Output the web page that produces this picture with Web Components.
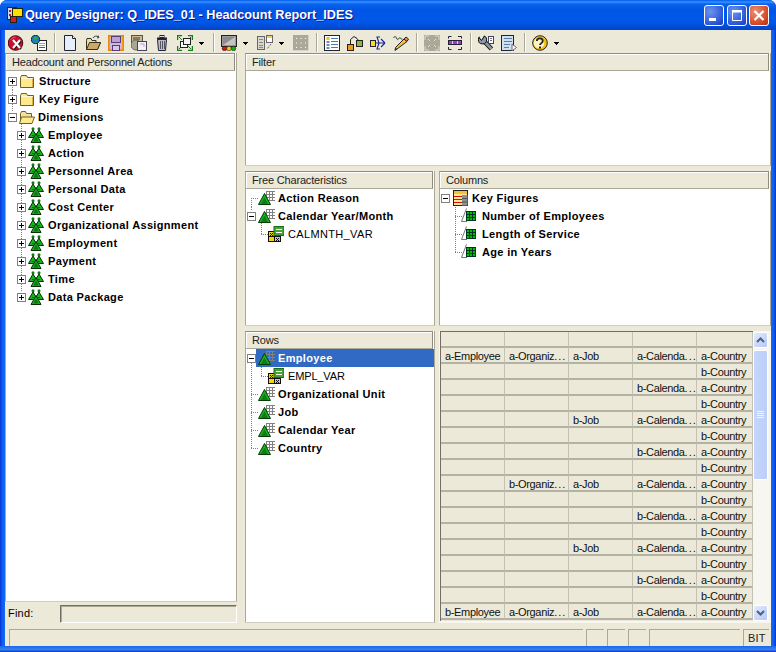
<!DOCTYPE html>
<html><head><meta charset="utf-8"><title>Query Designer</title>
<style>
html,body{margin:0;padding:0;background:#fff}
body{font:11px "Liberation Sans",Arial,sans-serif;color:#000}
</style></head><body>
<xp-window title="Query Designer: Q_IDES_01 - Headcount Report_IDES">
  <xp-toolbar slot="toolbar">
    <tool-btn icon="stop"></tool-btn><tool-btn icon="globe"></tool-btn><tool-sep></tool-sep>
    <tool-btn icon="new"></tool-btn><tool-btn icon="open"></tool-btn><tool-btn icon="save"></tool-btn><tool-btn icon="copy"></tool-btn><tool-btn icon="trash"></tool-btn><tool-btn icon="frame"></tool-btn><tool-arrow></tool-arrow><tool-sep></tool-sep>
    <tool-btn icon="monitor"></tool-btn><tool-arrow></tool-arrow><tool-btn icon="dual"></tool-btn><tool-arrow></tool-arrow><tool-btn icon="dis1"></tool-btn><tool-sep></tool-sep>
    <tool-btn icon="list"></tool-btn><tool-btn icon="tree"></tool-btn><tool-btn icon="share"></tool-btn><tool-btn icon="pencil"></tool-btn><tool-sep></tool-sep>
    <tool-btn icon="dis2"></tool-btn><tool-btn icon="purple"></tool-btn><tool-sep></tool-sep>
    <tool-btn icon="wrench"></tool-btn><tool-btn icon="doc"></tool-btn><tool-sep></tool-sep>
    <tool-btn icon="help"></tool-btn><tool-arrow></tool-arrow>
  </xp-toolbar>
  <qd-workspace slot="main">
    <qd-side slot="side">
      <xp-pane heading="Headcount and Personnel Actions" style="flex:1">
        <tree-row style="margin-top:1px" icon="folder" exp="+" x="2" pad="4" text="Structure" bold guides="v6:9:9"></tree-row>
        <tree-row icon="folder" exp="+" x="2" pad="4" text="Key Figure" bold guides="v6:0:18"></tree-row>
        <tree-row icon="folderopen" exp="-" x="2" gap="2" pad="3" text="Dimensions" bold guides="v6:0:4 v15:14:4"></tree-row>
        <tree-row icon="hier" exp="+" x="11" gap="2" text="Employee" bold guides="v15:0:18"></tree-row>
        <tree-row icon="hier" exp="+" x="11" gap="2" text="Action" bold guides="v15:0:18"></tree-row>
        <tree-row icon="hier" exp="+" x="11" gap="2" text="Personnel Area" bold guides="v15:0:18"></tree-row>
        <tree-row icon="hier" exp="+" x="11" gap="2" text="Personal Data" bold guides="v15:0:18"></tree-row>
        <tree-row icon="hier" exp="+" x="11" gap="2" text="Cost Center" bold guides="v15:0:18"></tree-row>
        <tree-row icon="hier" exp="+" x="11" gap="2" text="Organizational Assignment" bold guides="v15:0:18"></tree-row>
        <tree-row icon="hier" exp="+" x="11" gap="2" text="Employment" bold guides="v15:0:18"></tree-row>
        <tree-row icon="hier" exp="+" x="11" gap="2" text="Payment" bold guides="v15:0:18"></tree-row>
        <tree-row icon="hier" exp="+" x="11" gap="2" text="Time" bold guides="v15:0:18"></tree-row>
        <tree-row icon="hier" exp="+" x="11" gap="2" text="Data Package" bold guides="v15:0:4"></tree-row>
      </xp-pane>
      <find-bar></find-bar>
    </qd-side>
    <qd-right slot="right">
      <xp-pane heading="Filter" style="grid-column:1 / span 2"></xp-pane>
      <xp-pane heading="Free Characteristics">
        <tree-row icon="char" x="12" pad="3" text="Action Reason" bold guides="v5:9:9 h5:9:7"></tree-row>
        <tree-row icon="char" exp="-" x="1" gap="2" pad="3" text="Calendar Year/Month" bold guides="v5:0:4 v15:14:4"></tree-row>
        <tree-row style="--ls:.35px" icon="var" x="22" text="CALMNTH_VAR" guides="v15:0:9 h15:9:7"></tree-row>
      </xp-pane>
      <xp-pane heading="Columns">
        <tree-row icon="kfs" exp="-" x="1" gap="3" text="Key Figures" bold guides="v15:14:4"></tree-row>
        <tree-row icon="kf" x="21" pad="5" text="Number of Employees" bold guides="v15:0:18 h15:9:7"></tree-row>
        <tree-row icon="kf" x="21" pad="5" text="Length of Service" bold guides="v15:0:18 h15:9:7"></tree-row>
        <tree-row icon="kf" x="21" pad="5" text="Age in Years" bold guides="v15:0:9 h15:9:7"></tree-row>
      </xp-pane>
      <xp-pane heading="Rows">
        <tree-row icon="char" exp="-" x="1" gap="2" pad="3" text="Employee" bold selected guides="v5:14:4"></tree-row>
        <tree-row style="--ls:-.15px" icon="var" x="22" text="EMPL_VAR" guides="v5:0:18 v15:0:9 h15:9:7"></tree-row>
        <tree-row icon="char" x="12" pad="3" text="Organizational Unit" bold guides="v5:0:18 h5:9:7"></tree-row>
        <tree-row icon="char" x="12" pad="3" text="Job" bold guides="v5:0:18 h5:9:7"></tree-row>
        <tree-row icon="char" x="12" pad="3" text="Calendar Year" bold guides="v5:0:18 h5:9:7"></tree-row>
        <tree-row icon="char" x="12" pad="3" text="Country" bold guides="v5:0:9 h5:9:7"></tree-row>
      </xp-pane>
      <preview-grid></preview-grid>
    </qd-right>
  </qd-workspace>
  <xp-status slot="status"></xp-status>
</xp-window>
<script>
const S=(b,w=16,h=16)=>`<svg xmlns="http://www.w3.org/2000/svg" width="${w}" height="${h}" viewBox="0 0 ${w} ${h}">${b}</svg>`;
const grid=(x,y,n,c,st)=>{let s='';for(let i=0;i<=n;i++){s+=`<path d="M${x+i*st+.5} ${y}v${n*st+1}M${x} ${y+i*st+.5}h${n*st+1}" stroke="${c}" fill="none" shape-rendering="crispEdges"/>`}return s};
const ICONS={
stop:S(`<circle cx="7.500" cy="8" r="7.300" fill="#cc0f2c" stroke="#3a0008" stroke-width=".9"/><path d="M2.500 5a6 6 0 0 1 5-3" stroke="#f58" fill="none"/><path d="M6 6l7 8M13 6l-7 8" stroke="#222" stroke-width="2"/><path d="M5 5l7 8M12 5l-7 8" stroke="#fff" stroke-width="2"/>`),
globe:S(`<rect x="6.500" y="5.500" width="9" height="10" fill="#fff" stroke="#222"/><path d="M8 8.500h6M8 10.500h6" stroke="#d8a020"/><path d="M8 12.500h6" stroke="#c22"/><circle cx="4.500" cy="4.500" r="4.100" fill="#1b7fc0" stroke="#123"/><path d="M2 3l3-2 2 2-3 2zM4 6l2 1-1 1z" fill="#2fae3a"/>`),
new:S(`<path d="M2.500.5h8l3 3v12h-11z" fill="#e6eefb" stroke="#223"/><path d="M10.500.5v3h3" fill="#fff" stroke="#223"/>`,16,16),
open:S(`<path d="M1.500 5.500v9h11l3-7H11V5.500H7l-1-2H2z" fill="#efd9a8" stroke="#332"/><path d="M1.500 14.500l3-7h11l-3 7z" fill="#cfa868" stroke="#332"/><path d="M8 3c1-2 4-2.500 5-1M13 .5l1 2-2 .5" fill="none" stroke="#444"/>`),
save:S(`<rect x=".5" y=".5" width="15" height="15" fill="#cdb8df" stroke="#e88a10"/><rect x="1.500" y="1.500" width="13" height="13" fill="none" stroke="#f39a1a"/><rect x="3.500" y="1.500" width="9" height="6" fill="#b9a4d0" stroke="#5a3a7a"/><rect x="4.500" y="10.500" width="7" height="5" fill="#d8c8e6" stroke="#5a3a7a"/>`),
copy:S(`<rect x=".5" y=".5" width="11" height="11" fill="#cdbb8e" stroke="#554"/><rect x="2" y="2" width="7" height="3" fill="#8a7a58"/><circle cx="5" cy="10" r="5" fill="#a8a890" stroke="#667"/><rect x="6.500" y="6.500" width="9" height="9" fill="#f4f0fa" stroke="#445"/><path d="M9 9h4v3" stroke="#b7a5c7" fill="none"/>`),
trash:S(`<path d="M2 3.500h10" stroke="#223" stroke-width="2"/><rect x="5" y=".5" width="4" height="2" fill="#ddd" stroke="#223"/><path d="M2.500 4.500l1 11h7l1-11z" fill="#b9bdc6" stroke="#223"/><path d="M5.500 6v8M7.500 6v8M9.500 6v8" stroke="#556"/>`,14,16),
frame:S(`<path d="M.5 5V.5H5M11 .5h4.500V5M.5 11v4.500H5M15.500 11v4.500H11" fill="none" stroke="#1a7a1a" stroke-width="1.500"/><path d="M2 2l3 3M14 2l-3 3M2 14l3-3M14 14l-3-3" stroke="#1a7a1a"/><rect x="3.500" y="6.500" width="7" height="6" fill="#fff" stroke="#222"/><rect x="6.500" y="3.500" width="7" height="6" fill="#f4f4f4" stroke="#222"/>`),
monitor:S(`<rect x=".5" y=".5" width="15" height="11" fill="#9b9b9b" stroke="#222"/><rect x="2" y="2" width="12" height="8" fill="#c4c4c4"/><path d="M2 2h12L2 10z" fill="#8c8c8c"/><circle cx="3.500" cy="13.500" r="2.300" fill="#e01010" stroke="#222" stroke-width=".6"/><circle cx="8" cy="13.500" r="2.300" fill="#f0d010" stroke="#222" stroke-width=".6"/><circle cx="12.500" cy="13.500" r="2.300" fill="#10b010" stroke="#222" stroke-width=".6"/>`),
dual:S(`<rect x=".5" y="1.500" width="7" height="13" fill="#d8d8d0" stroke="#666"/><path d="M2 4.500h4M2 7.500h4M2 10.500h4M2 12.500h4" stroke="#888"/><rect x="9.500" y=".5" width="6" height="7" fill="#fff" stroke="#666"/><rect x="10" y="1" width="5" height="2" fill="#f2d060"/><path d="M14 9l-4 5" stroke="#444" stroke-dasharray="1 1"/>`),
dis1:S(`<rect width="16" height="16" fill="#aca899"/><path d="M3.500 3v1M8 3v1M12.500 3v1M12.500 7.500v1M12.500 12v1M8 7.500v1M3.500 7.500v1M3.500 12v1M8 12v1" stroke="#fff" stroke-dasharray="1 1"/><path d="M16 0v16H0" stroke="#fff" fill="none" stroke-width="1"/>`),
list:S(`<rect x=".5" y=".5" width="15" height="15" fill="#fff" stroke="#223"/><path d="M7 3.500h7M7 6.500h7M7 9.500h7M7 12.500h7" stroke="#4a78b0"/><rect x="2.500" y="2" width="3" height="3" fill="#e0c020"/><path d="M2.500 6h3v2h-3zM2.500 9h3v2h-3zM2.500 12h3v2h-3z" fill="#6a8ab8"/>`),
tree:S(`<rect x=".5" y="9.500" width="6" height="6" fill="#f49a10" stroke="#222"/><rect x="9.500" y="5.500" width="6" height="6" fill="#98b040" stroke="#222"/><path d="M3.500 9V4.500L7 1.500l3 2 1.500 2" fill="none" stroke="#222"/>`),
share:S(`<rect x=".5" y="5.500" width="5" height="6" fill="#f4e020" stroke="#223"/><path d="M6 8h9M15 8l-4-4M15 8l-4 4M9 8l-2-6h3M9 8l-2 6h3" fill="none" stroke="#1a28a0" stroke-width="1.100"/>`),
pencil:S(`<path d="M4 14l-2 1.500.5-3L11 4l3 2.500z" fill="#f4c040" stroke="#222"/><path d="M11 4l2-2 2.500 2-1.500 2.500z" fill="#f08a70" stroke="#222"/><path d="M2 15l1-2 1 1z" fill="#222"/><path d="M.5 3c1-2 2-2 3 0s1 2 2 1 1-2 2-1 1 2 2 1" fill="none" stroke="#333"/>`),
dis2:S(`<rect width="16" height="16" fill="#aca899"/><path d="M1 4.500V1h3.500M11.500 1H15v3.500M1 11.500V15h3.500M15 11.500V15h-3.500M4 4l2.500 2.500M12 4L9.500 6.500M4 12l2.500-2.500M12 12L9.500 9.500" fill="none" stroke="#fff" stroke-dasharray="1 1"/>`),
purple:S(`<path d="M1.500 3.500v-2h3M11 1.500h3.500v2M1.500 12v2.500h3M14.500 12v2.500H11" fill="none" stroke="#223"/><rect x="1.500" y="5.500" width="13" height="4" fill="#9a40b8" stroke="#223"/><path d="M5.500 6v3M10.500 6v3" stroke="#e8d0f0"/>`),
wrench:S(`<path d="M5 5l8.500 9" stroke="#111" stroke-width="4.600"/><path d="M5 5l8.500 9" stroke="#8b98a4" stroke-width="2.600"/><circle cx="4.500" cy="4.800" r="4.100" fill="#8b98a4" stroke="#111"/><path d="M0-1L3.500 5 7-1z" fill="#ece9d8"/><path d="M.7 2.500L3.500 5.500 6.500 1" fill="none" stroke="#111"/><rect x="10.500" y="1.500" width="5" height="7" fill="#fff" stroke="#445"/><path d="M12 3.500h2M12 5.500h2" stroke="#668"/>`),
doc:S(`<rect x=".5" y=".5" width="12" height="15" fill="#cfe0ef" stroke="#223"/><path d="M3 3.500h8M3 6.500h8M3 9.500h6M3 12.500h5" stroke="#5a7fa8"/><path d="M11 9l4.500 3.500-4.500 3.500z" fill="#fff" stroke="#667"/>`),
help:S(`<circle cx="8" cy="8" r="7.300" fill="#f7c010" stroke="#222"/><circle cx="7" cy="8" r="5.300" fill="#fff3c0"/><path d="M4.800 6c0-3.500 6-3.500 6 0 0 2-2.800 2.200-2.800 4" fill="none" stroke="#222" stroke-width="1.800"/><rect x="7" y="11.500" width="2" height="2" fill="#222"/>`),
folder:S(`<path d="M.5 3.500l1-2h5l1 2h6v10H.5z" fill="#ffe98f" stroke="#6e6020"/><path d="M1.500 4.500h11" stroke="#fff8d0"/><path d="M12.500 5v8" stroke="#e0b040"/>`,15,14),
folderopen:S(`<path d="M1.500 13V3.500l1-2h4l1 2h5V7" fill="#f2e2a0" stroke="#6e6020"/><path d="M.5 13.500l2-6.500h13l-2.500 6.500z" fill="#ffe98f" stroke="#6e6020"/>`,16,14),
hier:S(`<circle cx="5" cy="1.700" r="1.500" fill="#0f7a14"/><circle cx="11" cy="1.700" r="1.500" fill="#0f7a14"/><path d="M5 3L.5 10.500h9zM11 3L6.500 10.500h9z" fill="#15b51d" stroke="#053005"/><path d="M8 6.500L3 15.500h10z" fill="#15b51d" stroke="#053005"/><path d="M8 9l-2.500 5.500h5z" fill="#0c7a10"/><path d="M4 8.500h2M10 8.500h2" stroke="#0a6a0e"/>`,16,16),
char:S(grid(8,1,3,'#808080',3)+`<path d="M6.500 3.500L.5 14.500h12z" fill="#17b020" stroke="#063a06"/><path d="M6.500 7.500l-3.500 6.500h7z" fill="#0b7f10"/>`,17,16),
kf:S(`<path d="M5.500 .5L.5 13.500H6" fill="#fff" stroke="#777"/><rect x="5" y="3" width="10" height="10" fill="#00c000"/>`+grid(5,3,3,'#032',3),16,16),
kfs:S(`<rect x=".5" y=".5" width="14" height="15" fill="#ffe890" stroke="#222"/><path d="M1 1h13v3H1z" fill="#f0c040"/><path d="M1 6.500h8M1 9.500h8M1 12.500h8" stroke="#d01010"/><rect x="9" y="5" width="5.500" height="10.500" fill="#909090"/><path d="M9 8.500h6M9 12h6" stroke="#555"/>`,15,16),
var:S(`<rect x=".5" y="5.500" width="12" height="10" fill="#f2d800" stroke="#111"/><path d="M6.500 6v9M1 10.500h11" stroke="#111"/><path d="M2 7l3 3M5 7l-3 3M8 12l3 3M11 12l-3 3" stroke="#111"/><rect x="6" y=".5" width="10" height="9" fill="#48a038" stroke="#1e6a18"/><path d="M8 3.500h6M8 6.500h6" stroke="#fff"/>`,16,16)
};
function def(name,css,html){
  customElements.define(name,class extends HTMLElement{
    constructor(){super();const r=this.attachShadow({mode:'open'});
      r.innerHTML=`<style>${css}</style>${typeof html==='function'?'':html}`;}
    connectedCallback(){if(typeof html==='function'&&!this._d){this._d=1;this.shadowRoot.innerHTML+=html(this);}}
  });
}
def('xp-window',`
:host{display:flex;flex-direction:column;width:776px;height:652px;overflow:hidden;border-radius:7px 7px 0 0;background:linear-gradient(90deg,#0831d9 0,#0a5bee 2px,#166aee 5px,#166aee 771px,#0a5bee 774px,#0831d9 776px);box-sizing:border-box;font:11px "Liberation Sans",sans-serif}
.tb{height:30px;flex:none;display:flex;align-items:center;padding:0 7px 0 6px;background:linear-gradient(180deg,#0058ee 0,#3593ff 2px,#0a62ec 4px,#0055e5 10px,#0058ea 22px,#0348cf 28px,#0242c4 30px);box-sizing:border-box}
.logo{width:18px;height:18px;flex:none;margin-right:1px}
.ti{flex:1;font:bold 12.7px "Liberation Sans",sans-serif;color:#fff;text-shadow:1px 1px #0f1089;white-space:pre}
.b{width:20px;height:21px;border:1px solid #fff;border-radius:3px;box-sizing:border-box;margin-left:2px;flex:none;display:block}
.b2{margin-left:3px}
.b1,.b2{background:radial-gradient(circle at 30% 30%,#6c94ee,#2a56d8 70%,#1a3cb0)}
.b3{background:radial-gradient(circle at 30% 30%,#ec9078,#d8502c 60%,#b03010)}
.c{margin:0 5px;flex:1;min-height:0;display:flex;flex-direction:column;background:#ece9d8}
.m{flex:1;min-height:0}
.f{height:6px;flex:none;background:linear-gradient(180deg,#166aee,#3a80e8 60%,#0831d9)}
::slotted([slot=toolbar]){flex:none}
`,t=>`<div class="tb"><svg class="logo" viewBox="0 0 18 18"><rect x="1.500" y="1.500" width="9" height="12" fill="#c8d8f0" stroke="#223"/><path d="M3 4h2v2H3zM6 4h2v2H6zM3 8h2v2H3z" fill="#c01818"/><rect x="6.500" y="2.500" width="10" height="8" fill="#f8e000" stroke="#221"/><rect x="4.500" y="10.500" width="6" height="6" fill="#d02020" stroke="#221"/></svg><span class="ti">${t.getAttribute('title')}</span>
<svg class="b b1" viewBox="0 0 18 19"><rect x="4" y="12" width="7" height="3" fill="#fff"/></svg><svg class="b b2" viewBox="0 0 18 19"><path d="M4.500 5.500h9v9h-9z" fill="none" stroke="#fff"/><rect x="4" y="4" width="10" height="2.500" fill="#fff"/></svg><svg class="b b3" viewBox="0 0 18 19"><path d="M4.500 5l9 9M13.500 5l-9 9" stroke="#fff" stroke-width="2.200"/></svg></div>
<div class="c"><slot name="toolbar"></slot><div class="m"><slot name="main"></slot></div><slot name="status"></slot></div><div class="f"></div>`);
def('xp-toolbar',`:host{display:flex;align-items:center;height:23px;padding-left:3px;box-sizing:border-box;background:#ece9d8}`,`<slot></slot>`);
def('tool-btn',`:host{display:flex;width:16px;height:16px;margin:2px 7px 0 0;flex:none;justify-content:center;align-items:center}`,t=>ICONS[t.getAttribute('icon')]);
def('tool-sep',`:host{display:block;width:1px;height:19px;margin:1px 6px 0 0;background:#aca899;border-right:1px solid #fff;flex:none}`,``);
def('tool-arrow',`:host{display:block;width:7px;height:3px;margin:4px 8px 0 -2px;flex:none;clip-path:polygon(1px 0,6px 0,6px 1px,5px 1px,5px 2px,4px 2px,4px 3px,3px 3px,3px 2px,2px 2px,2px 1px,1px 1px);background:#000}`,``);
def('qd-workspace',`:host{display:grid;grid-template-columns:232px 526px;column-gap:8px;height:571px}
::slotted(*){min-height:0}`,`<slot name="side"></slot><slot name="right"></slot>`);
def('qd-side',`:host{display:flex;flex-direction:column;height:571px}`,`<slot></slot>`);
def('qd-right',`:host{display:grid;grid-template-columns:190px 332px;grid-template-rows:113px 155px 292px;column-gap:4px;row-gap:5px}`,`<slot></slot>`);
def('xp-pane',`:host{display:flex;flex-direction:column;min-width:0;min-height:0;background:#fff;box-sizing:border-box;border-right:1px solid #aca899;border-bottom:1px solid #d0cdc0;overflow:hidden}
.h{height:18px;flex:none;box-sizing:border-box;background:#ece9d8;border:1px solid;border-color:#8f8c7f #8f8c7f #aca899 #aca899;box-shadow:inset 1px 1px #fff;padding-left:6px;line-height:16px;color:#222;margin-right:1px;white-space:nowrap;letter-spacing:-.18px}
.b{flex:1;min-height:0;border-left:1px solid #aca899;overflow:hidden}`,t=>`<div class="h">${t.getAttribute('heading')}</div><div class="b"><slot></slot></div>`);
def('tree-row',`:host{display:flex;align-items:center;height:18px;position:relative;background-repeat:no-repeat}
.e{width:9px;height:9px;flex:none;display:block;position:relative}
.ic{display:flex;flex:none}
.t{white-space:nowrap}
.t.bold{font:bold 11px "Liberation Sans",sans-serif;letter-spacing:.34px}
.t.reg{font:11px "Liberation Sans",sans-serif;letter-spacing:var(--ls,.2px)}
.sel{display:none}
:host([selected]) .sel{display:block;position:absolute;left:10px;right:0;top:0;bottom:0;background:#316ac5}
:host([selected]) .t{color:#fff}
.rel{position:relative;display:flex;align-items:center}
`,t=>{
  const x=+t.getAttribute('x')||0,exp=t.getAttribute('exp'),ic=t.getAttribute('icon');
  const g=(t.getAttribute('guides')||'').split(/\s+/).filter(Boolean);
  const bi=[],bp=[],bs=[];
  g.forEach(s=>{const[_,k,a,b,c]=s.match(/([vh])(\d+):(\d+):(\d+)/);
    if(k==='v'){bi.push('repeating-linear-gradient(180deg,#808080 0 1px,transparent 1px 2px)');bp.push(`${a}px ${b}px`);bs.push(`1px ${c}px`);}
    else{bi.push('repeating-linear-gradient(90deg,#808080 0 1px,transparent 1px 2px)');bp.push(`${a}px ${b}px`);bs.push(`${c}px 1px`);}
  });
  t.style.backgroundImage=bi.join(',');t.style.backgroundPosition=bp.join(',');t.style.backgroundSize=bs.join(',');
  const ex=exp?`<svg class="e" viewBox="0 0 9 9" style="margin-left:${x}px"><rect x=".5" y=".5" width="8" height="8" fill="#fff" stroke="#808080"/><path d="M2 4.500h5${exp==='+'?'M4.500 2v5':''}" stroke="#000"/></svg>`:'';
  const gap=t.getAttribute('gap');
  const ml=exp?(gap!==null?+gap:3):x;
  const pad=t.getAttribute('pad')||4;
  const cls=t.hasAttribute('bold')?'bold':'reg';
  return `<div class="sel"></div>${ex}<div class="rel" style="margin-left:${ml}px"><span class="ic">${ICONS[ic]}</span><span class="t ${cls}" style="padding-left:${pad}px">${t.getAttribute('text')}</span></div>`;
});
def('find-bar',`:host{display:flex;align-items:center;height:18px;margin:3px 0 1px;flex:none;font:11px "Liberation Sans",sans-serif;padding-left:3px;letter-spacing:.2px}
label{width:52px;padding-bottom:2px}
.i{flex:1;height:18px;box-sizing:border-box;border:1px solid;border-color:#716f64 #fff #fff #716f64;background:#ece9d8;box-shadow:inset 1px 1px #aca899}`,`<label>Find:</label><div class="i"></div>`);
const ROWS=[
['a-Employee','a-Organiz...','a-Job','a-Calenda...','a-Country'],['','','','','b-Country'],['','','','b-Calenda...','a-Country'],['','','','','b-Country'],
['','','b-Job','a-Calenda...','a-Country'],['','','','','b-Country'],['','','','b-Calenda...','a-Country'],['','','','','b-Country'],
['','b-Organiz...','a-Job','a-Calenda...','a-Country'],['','','','','b-Country'],['','','','b-Calenda...','a-Country'],['','','','','b-Country'],
['','','b-Job','a-Calenda...','a-Country'],['','','','','b-Country'],['','','','b-Calenda...','a-Country'],['','','','','b-Country'],
['b-Employee','a-Organiz...','a-Job','a-Calenda...','a-Country']];
def('preview-grid',`:host{display:flex;background:#f7f6f0;min-height:0;overflow:hidden;padding-left:1px;box-sizing:border-box}
.g{width:313px;height:290px;border:solid #716f64;border-width:1px 0 0 1px;box-sizing:border-box;display:grid;grid-template-columns:64px 64px 64px 64px 1fr;grid-auto-rows:16px;overflow:hidden;flex:none;background:#ece9d8}
.g div{box-sizing:border-box;border-right:1px solid #c4c2b4;border-bottom:2px solid #b4b2a4;padding-left:4px;font:11px/16px "Liberation Sans",sans-serif;letter-spacing:-.35px;color:#111;white-space:nowrap;overflow:hidden;background:#ece9d8}
.g i{font-style:normal;letter-spacing:1px}
.s{flex:none;width:15px;margin-top:1px;display:flex;flex-direction:column;height:290px}
.u{height:16px;flex:none;margin-bottom:1px;border:1px solid #fff;border-radius:2px;box-sizing:border-box;background:linear-gradient(135deg,#e4ecfd,#b4c8f6);display:flex;align-items:center;justify-content:center}
.th{height:130px;flex:none;border:1px solid #fff;border-radius:2px;box-sizing:border-box;background:linear-gradient(90deg,#c6d6fb,#bccffa);display:flex;align-items:center;justify-content:center;margin-top:1px}
.sp{flex:1}`,()=>{
  let h='';for(let i=0;i<5;i++)h+='<div></div>';
  ROWS.forEach(r=>r.forEach(c=>h+=`<div>${c.replace('...','<i>...</i>')}</div>`));
  return `<div class="g">${h}</div><div class="s"><div class="u"><svg width="9" height="6" viewBox="0 0 9 6"><path d="M1 5l3.500-3.500L8 5" fill="none" stroke="#4d6185" stroke-width="2"/></svg></div><div class="th"><svg width="7" height="8" viewBox="0 0 7 8"><path d="M0 .5h7M0 2.500h7M0 4.500h7M0 6.500h7" stroke="#eef3ff"/></svg></div><div class="sp"></div><div class="u"><svg width="9" height="6" viewBox="0 0 9 6"><path d="M1 1l3.500 3.500L8 1" fill="none" stroke="#4d6185" stroke-width="2"/></svg></div></div>`;
});
def('xp-status',`:host{display:flex;height:22px;box-sizing:border-box;padding:5px 0 0 4px;column-gap:3px;background:#ece9d8;font:11px "Liberation Sans",sans-serif;letter-spacing:.2px}
div{box-sizing:border-box;height:17px;border-top:1px solid #aca899;border-left:1px solid #aca899;flex:none;line-height:16px;padding-left:4px;color:#222}`,
`<div style="width:574px"></div><div style="width:18px"></div><div style="width:18px"></div><div style="width:18px"></div><div style="width:91px"></div><div style="width:26px">BIT</div>`);
</script>
</body></html>
